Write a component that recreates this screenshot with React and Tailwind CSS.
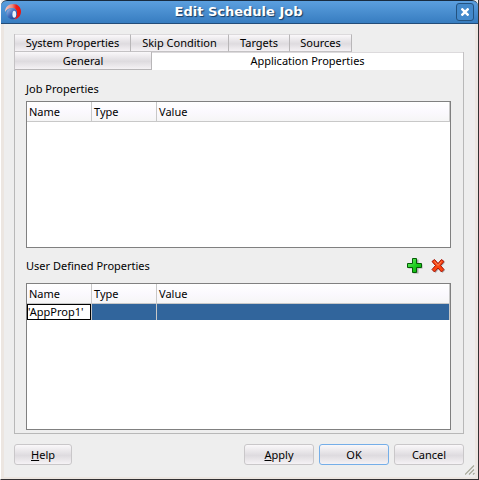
import React, { useState } from 'react';

const upperTabs = [
    { label: 'System Properties', width: 'w-[116px]' },
    { label: 'Skip Condition', width: 'w-[98px]' },
    { label: 'Targets', width: 'w-[61px]' },
    { label: 'Sources', width: 'w-[62px]' },
];

const glossy = 'bg-linear-to-b from-[#faf8fa] via-[#dedbdf] via-55% to-[#f5f2f5]';

function AppLogo() {
    return (
        <svg className="size-4 shrink-0" viewBox="0 0 16 16" aria-hidden="true">
            <defs>
                <linearGradient id="ring" x1="0" y1="0" x2="1" y2="0">
                    <stop offset="0" stopColor="#f7c9c2" />
                    <stop offset="0.45" stopColor="#e88a80" />
                    <stop offset="0.7" stopColor="#f01d16" />
                    <stop offset="1" stopColor="#e81410" />
                </linearGradient>
                <linearGradient id="ball" x1="0" y1="0" x2="1" y2="1">
                    <stop offset="0" stopColor="#a9c4ea" />
                    <stop offset="0.5" stopColor="#3a67b8" />
                    <stop offset="1" stopColor="#173e8c" />
                </linearGradient>
            </defs>
            <path d="M0 8C0 3 3.500 0 8 0c5 0 8 3.500 8 7.500C16 12 13 15 8.500 15.500c2.500-2 3.500-4 3.500-6.500 0-3-2-5-5-5C4 4 1.500 5.500 0 8z" fill="url(#ring)" />
            <path d="M1.500 9C2 6 4 4.500 6.500 4.500c3.500 0 5.500 2 5.500 5 0 3-1.500 5.800-4 5.800C4.500 15.300 1.500 13 1.500 9z" fill="url(#ball)" />
            <ellipse cx="9.300" cy="10.200" rx="1.900" ry="3.500" fill="#e8f2fb" />
        </svg>
    );
}

function PlusIcon() {
    return (
        <svg className="size-4" viewBox="0 0 16 16" aria-hidden="true">
            <defs>
                <linearGradient id="green" x1="0" y1="0" x2="1" y2="1">
                    <stop offset="0" stopColor="#7df07a" />
                    <stop offset="0.5" stopColor="#1fce1f" />
                    <stop offset="1" stopColor="#0aa80a" />
                </linearGradient>
            </defs>
            <path d="M6.500 1.500h5v5h4v4h-4v5h-5v-5h-5v-4h5z" fill="#a9a9a9" />
            <path d="M5.500 0.500h4v5h5v4h-5v5h-4v-5h-5v-4h5z" fill="url(#green)" stroke="#045c04" strokeLinejoin="round" />
        </svg>
    );
}

function DeleteIcon() {
    const cross = 'M3.500 1.500l3.500 4 3.500-4 2.500 2-3.500 4 3.500 4-2.500 2.500-3.500-4-3.500 4L1 11.500l3.500-4L1 3.500z';
    return (
        <svg className="size-4" viewBox="0 0 16 16" aria-hidden="true">
            <path d={cross} fill="#b0b0b0" transform="translate(1 1)" />
            <path d={cross} fill="#fb4410" stroke="#a31408" strokeLinejoin="round" />
            <path d="M3.500 3.500l3.500 4 3.500-4" fill="none" stroke="#ff8a55" />
        </svg>
    );
}

function PropertyTable({ label, rows }) {
    return (
        <div className="shrink-0 grow basis-36 border border-[#808080] bg-white">
            <table aria-label={label} className="w-full table-fixed border-separate border-spacing-0">
                <colgroup>
                    <col className="w-[65px]" />
                    <col className="w-[65px]" />
                    <col />
                </colgroup>
                <thead>
                    <tr className="h-5 bg-linear-to-b from-white via-[#fbf9fe] to-[#f5f5f5]">
                        {['Name', 'Type', 'Value'].map((name) => (
                            <th key={name} scope="col" className="border-r border-b border-[#c8c8c8] px-0.5 py-0 text-left font-normal">
                                {name}
                            </th>
                        ))}
                    </tr>
                </thead>
                <tbody>
                    {rows.map((row, i) => (
                        <tr key={i} className="h-4 bg-[#31659c] text-white">
                            <td className="border-r border-[#c8c8c8] bg-white p-0">
                                <input
                                    aria-label="Name"
                                    defaultValue={row.name}
                                    className="block h-4 w-full border border-black bg-white text-black outline-none"
                                />
                            </td>
                            <td className="border-r border-[#c8c8c8] p-0">{row.type}</td>
                            <td className="border-r border-[#c8c8c8] p-0">{row.value}</td>
                        </tr>
                    ))}
                </tbody>
            </table>
        </div>
    );
}

function DialogButton({ children, width, primary }) {
    return (
        <button
            type="button"
            className={`h-[21px] rounded-[3px] border ${primary ? 'border-[#75aee8]' : 'border-[#c9c7c9]'} ${glossy} ${width}`}
        >
            {children}
        </button>
    );
}

function App() {
    const [activeTab, setActiveTab] = useState('Application Properties');
    const [rows, setRows] = useState([{ name: "'AppProp1'", type: '', value: '' }]);

    const tabColor = (name) => (activeTab === name ? 'bg-white' : glossy);

    return (
        <div className="flex min-h-screen flex-col border-r border-b border-l border-[#333133] border-l-white bg-[#eeeeee] font-['Noto_Sans','DejaVu_Sans',sans-serif] text-[11px] leading-4 text-black">
            <header className="flex h-6 shrink-0 items-center rounded-t-md border-t border-b border-t-[#182b40] border-b-[#234c78] bg-linear-to-b from-[#5b9fdf] to-[#377dc0] px-1">
                <AppLogo />
                <h1 className="flex-1 text-center font-['DejaVu_Sans',sans-serif] text-[13px] font-bold text-white text-shadow-[1px_1px_1px_#173a60]">
                    Edit Schedule Job
                </h1>
                <button
                    type="button"
                    aria-label="Close"
                    className="flex size-[18px] items-center justify-center rounded-[3px] border border-[#23527f] bg-[#4389cb]"
                >
                    <svg className="size-2" viewBox="0 0 8 8" aria-hidden="true">
                        <path d="M0.500 0.500l7 7M7.500 0.500l-7 7" stroke="white" strokeWidth="2.400" />
                    </svg>
                </button>
            </header>

            <main className="relative flex flex-1 flex-col border-x-3 border-b-2 border-[#ece6e1] pt-2.5 pr-[11px] pb-3 pl-2.5">
                <div role="tablist" className="flex flex-col">
                    <div className="flex border-l border-[#c4c2c4]">
                        {upperTabs.map((tab) => (
                            <button
                                key={tab.label}
                                type="button"
                                role="tab"
                                aria-selected={activeTab === tab.label}
                                onClick={() => setActiveTab(tab.label)}
                                className={`h-[18px] border-t border-r border-b border-t-[#dcdadc] border-r-[#b8b6b8] border-b-[#c4c2c4] ${tab.width} ${tabColor(tab.label)}`}
                            >
                                {tab.label}
                            </button>
                        ))}
                    </div>
                    <div className="flex border-x border-[#c4c2c4]">
                        <button
                            type="button"
                            role="tab"
                            aria-selected={activeTab === 'General'}
                            onClick={() => setActiveTab('General')}
                            className={`h-[18px] w-[137px] border-r border-b border-[#b8b6b8] ${tabColor('General')}`}
                        >
                            General
                        </button>
                        <button
                            type="button"
                            role="tab"
                            aria-selected={activeTab === 'Application Properties'}
                            onClick={() => setActiveTab('Application Properties')}
                            className={`h-[18px] flex-1 border-y border-t-[#dcdadc] border-b-white ${tabColor('Application Properties')}`}
                        >
                            Application Properties
                        </button>
                    </div>
                </div>

                <section role="tabpanel" className="flex flex-1 flex-col border-x border-b border-[#b8b8b8] pt-[11px] pr-3 pb-[3px] pl-[11px]">
                    <h2 className="mb-1">Job Properties</h2>
                    <PropertyTable label="Job Properties" rows={[]} />
                    <div className="flex h-[35px] items-center">
                        <h2 className="flex-1">User Defined Properties</h2>
                        <div className="flex gap-2 pr-1">
                            <button
                                type="button"
                                aria-label="Add property"
                                onClick={() => setRows([...rows, { name: '', type: '', value: '' }])}
                            >
                                <PlusIcon />
                            </button>
                            <button type="button" aria-label="Delete property" onClick={() => setRows(rows.slice(0, -1))}>
                                <DeleteIcon />
                            </button>
                        </div>
                    </div>
                    <PropertyTable label="User Defined Properties" rows={rows} />
                </section>

                <footer className="mt-2.5 flex gap-[5px]">
                    <DialogButton width="w-[58px]"><u>H</u>elp</DialogButton>
                    <div className="flex-1" />
                    <DialogButton width="w-[70px]"><u>A</u>pply</DialogButton>
                    <DialogButton width="w-[70px]" primary>OK</DialogButton>
                    <DialogButton width="w-[70px]">Cancel</DialogButton>
                </footer>

                <svg className="absolute right-0 bottom-0.5 size-2.5" viewBox="0 0 10 10" aria-hidden="true">
                    <path d="M0 9.500l9-9M4 9.500l5-5M8 9.500l1.500-1.500" stroke="#a5a797" strokeWidth="1.200" />
                </svg>
            </main>
        </div>
    );
}

export default App;
